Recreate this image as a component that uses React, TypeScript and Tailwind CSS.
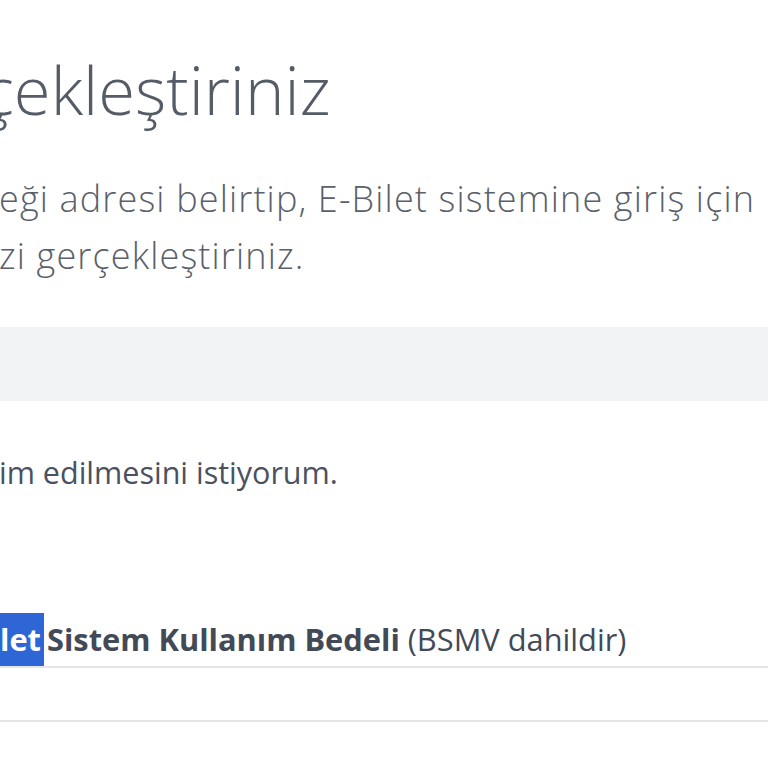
import React from "react";

export default function App() {
  return (
    <div className="w-[768px] h-[768px] overflow-hidden bg-white font-['Open_Sans','Noto_Sans',sans-serif]">
      <h1 className="pt-[56px] -ml-[18px] whitespace-nowrap text-[67px] font-light leading-[66px] text-[#555c67]">
        çekleştiriniz
      </h1>
      <div className="mt-[48px] -ml-[1px] whitespace-nowrap text-[36px] font-light leading-[57px] tracking-[1.15px] text-[#5a606a]">
        <p>eği adresi belirtip, E-Bilet sistemine giriş için</p>
        <p>zi gerçekleştiriniz.</p>
      </div>
      <div className="mt-[43px] h-[74px] w-full bg-[#f2f3f5]" />
      <p className="mt-[49px] -ml-[1px] whitespace-nowrap text-[30.5px] leading-[44px] text-[#4a5160]">
        im edilmesini istiyorum.
      </p>
      <div className="mt-[119px] flex flex-col">
        <div className="whitespace-nowrap border-b-2 border-[#e4e5e7] text-[30.8px] leading-[53px] text-[#434a57]">
          <span className="inline-block bg-[#2f66d6] pr-[3px] font-bold text-white">let</span>{" "}
          <span className="-ml-[5px] font-bold">Sistem Kullanım Bedeli</span>{" "}
          <span>(BSMV dahildir)</span>
        </div>
        <div className="h-[54px] border-b-2 border-[#e4e5e7]" />
      </div>
    </div>
  );
}
